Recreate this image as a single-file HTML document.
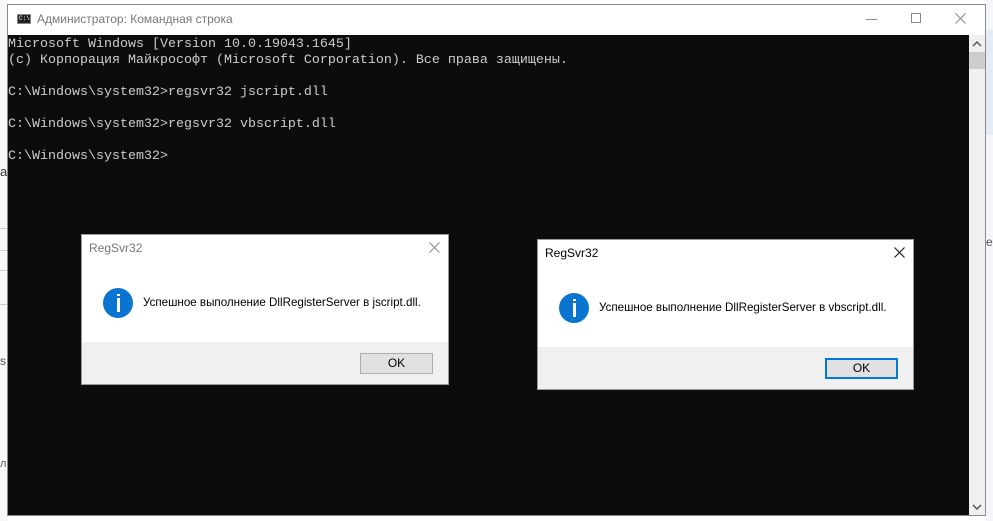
<!DOCTYPE html>
<html><head><meta charset="utf-8"><style>
*{margin:0;padding:0;box-sizing:border-box}
body{width:993px;height:521px;overflow:hidden;background:#fff;position:relative;font-family:"Liberation Sans",sans-serif}
.abs{position:absolute}
.con{left:8px;top:35px;width:961px;height:480px;background:#0c0c0c;color:#cccccc;font-family:"Liberation Mono",monospace;font-size:13.33px;line-height:16px;padding:2px 0 0 0;white-space:pre}
.dlg{background:#fff;border:1px solid #9a9a9a}
.foot{position:absolute;left:0;right:0;bottom:0;background:#f0f0f0}
.ok{position:absolute;background:#e1e1e1;border:1px solid #adadad;font-size:12px;text-align:center;color:#000}
.msg{position:absolute;font-size:11.6px;color:#000;white-space:nowrap}
.ico{position:absolute;width:30px;height:30px;border-radius:50%;background:#0a74d1}
.ico:after{content:"";position:absolute;left:13.5px;top:10px;width:3px;height:14px;background:#fff}
.ico:before{content:"";position:absolute;left:13.5px;top:6px;width:3px;height:2px;background:#fff}
</style></head><body>
<div class="abs" style="left:0;top:0;width:8px;height:521px;background:#f7f7f7"></div>
<div class="abs" style="left:0;top:164px;font-size:13px;color:#333">а</div>
<div class="abs" style="left:0;top:228px;width:8px;height:1px;background:#ccc"></div>
<div class="abs" style="left:0;top:250px;width:8px;height:1px;background:#ccc"></div>
<div class="abs" style="left:0;top:270px;width:8px;height:1px;background:#ccc"></div>
<div class="abs" style="left:0;top:304px;width:8px;height:1px;background:#ccc"></div>
<div class="abs" style="left:0;top:354px;font-size:12px;color:#555">s</div>
<div class="abs" style="left:0;top:458px;font-size:11px;color:#555">л</div>
<div class="abs" style="left:986px;top:0;width:7px;height:521px;background:#f4f6f9"></div>
<div class="abs" style="left:986px;top:30px;width:7px;height:105px;background:#e6ecf5"></div>
<div class="abs" style="left:986px;top:235px;font-size:12px;color:#555">e</div>
<div class="abs" style="left:7px;top:4px;width:979px;height:512px;border:1px solid #8a8a8a;background:#fff"></div>
<div class="abs" style="left:17px;top:14px;width:14px;height:10px;background:#222;border:1px solid #888"></div>
<div class="abs" style="left:19px;top:16px;font-size:6px;color:#fff;font-family:'Liberation Mono',monospace;line-height:6px">C:\</div>
<div class="abs" style="left:37px;top:12px;font-size:12px;color:#777">Администратор: Командная строка</div>
<div class="abs" style="left:866px;top:19px;width:11px;height:1px;background:#888"></div>
<div class="abs" style="left:911px;top:13px;width:10px;height:10px;border:1px solid #888"></div>
<svg class="abs" style="left:955px;top:13px" width="11" height="11"><path d="M0.5 0.5L10.5 10.5M10.5 0.5L0.5 10.5" stroke="#888" stroke-width="1"/></svg>
<div class="abs con">Microsoft Windows [Version 10.0.19043.1645]
(c) Корпорация Майкрософт (Microsoft Corporation). Все права защищены.

C:\Windows\system32&gt;regsvr32 jscript.dll

C:\Windows\system32&gt;regsvr32 vbscript.dll

C:\Windows\system32&gt;</div>
<div class="abs" style="left:969px;top:35px;width:16px;height:480px;background:#f0f0f0"></div>
<div class="abs" style="left:969px;top:52px;width:16px;height:17px;background:#cdcdcd"></div>
<svg class="abs" style="left:972px;top:40px" width="10" height="8"><path d="M1 6L5 2L9 6" stroke="#555" stroke-width="1.5" fill="none"/></svg>
<svg class="abs" style="left:972px;top:503px" width="10" height="8"><path d="M1 2L5 6L9 2" stroke="#555" stroke-width="1.5" fill="none"/></svg>
<div class="abs dlg" style="left:81px;top:234px;width:368px;height:151px">
<div class="foot" style="height:42px"></div>
</div>
<div class="abs" style="left:89px;top:241px;font-size:12px;color:#777">RegSvr32</div>
<svg class="abs" style="left:429px;top:242px" width="11" height="11"><path d="M0.5 0.5L10.5 10.5M10.5 0.5L0.5 10.5" stroke="#888" stroke-width="1"/></svg>
<div class="ico" style="left:103px;top:288px"></div>
<div class="msg" style="left:143px;top:296px">Успешное выполнение DllRegisterServer в jscript.dll.</div>
<div class="ok" style="left:360px;top:353px;width:73px;height:21px;line-height:19px">OK</div>
<div class="abs dlg" style="left:537px;top:239px;width:377px;height:151px">
<div class="foot" style="height:42px"></div>
</div>
<div class="abs" style="left:545px;top:246px;font-size:12px;color:#000">RegSvr32</div>
<svg class="abs" style="left:894px;top:247px" width="11" height="11"><path d="M0.5 0.5L10.5 10.5M10.5 0.5L0.5 10.5" stroke="#222" stroke-width="1.2"/></svg>
<div class="ico" style="left:559px;top:293px"></div>
<div class="msg" style="left:599px;top:301px">Успешное выполнение DllRegisterServer в vbscript.dll.</div>
<div class="ok" style="left:825px;top:358px;width:73px;height:21px;line-height:17px;border:2px solid #0078d7">OK</div>
</body></html>
